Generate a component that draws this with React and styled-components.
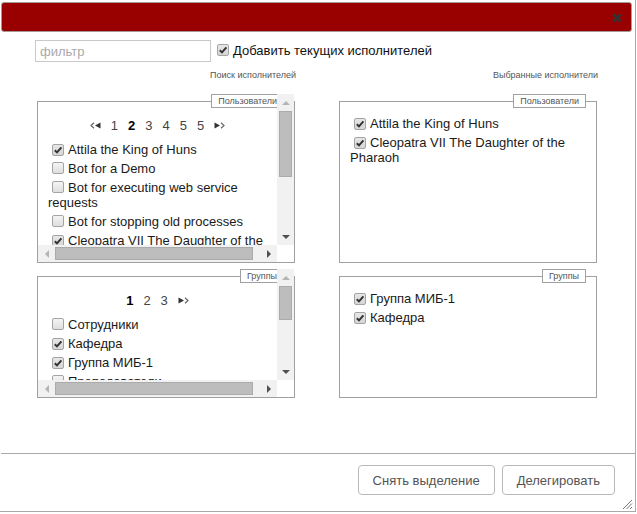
import React from "react";
import styled, { createGlobalStyle } from "styled-components";

const GlobalStyle = createGlobalStyle`
	html, body {
		margin: 0;
		padding: 0;
		background: #fff;
	}
	body {
		font-family: "Liberation Sans", Arial, sans-serif;
		font-size: 13px;
		color: #222;
	}
`;

const users = [
	{ name: "Attila the King of Huns", checked: true },
	{ name: "Bot for a Demo" },
	{ name: "Bot for executing web service requests" },
	{ name: "Bot for stopping old processes" },
	{ name: "Cleopatra VII The Daughter of the Pharaoh", checked: true },
	{ name: "Demo User" },
];

const groups = [
	{ name: "Сотрудники" },
	{ name: "Кафедра", checked: true },
	{ name: "Группа МИБ-1", checked: true },
	{ name: "Преподаватели" },
];

const pickedUsers = [
	{ name: "Attila the King of Huns", checked: true },
	{ name: "Cleopatra VII The Daughter of the Pharaoh", checked: true },
];

const pickedGroups = [
	{ name: "Группа МИБ-1", checked: true },
	{ name: "Кафедра", checked: true },
];

function Check({ checked }) {
	return (
		<CheckBox checked={checked}>
			{checked && (
				<svg width="10" height="10" viewBox="0 0 10 10">
					<path d="M1.8 5.2 L4 7.4 L8.4 2.4" fill="none" stroke="#333" strokeWidth="2" />
				</svg>
			)}
		</CheckBox>
	);
}

function PageArrow({ dir }) {
	return (
		<ArrowIcon width="11" height="7" viewBox="0 0 11 7">
			{dir === "prev" ? (
				<>
					<polyline points="4,0.8 1,3.5 4,6.2" fill="none" stroke="#666" strokeWidth="1.2" />
					<polygon points="10.5,0.5 5,3.5 10.5,6.5" fill="#333" />
				</>
			) : (
				<>
					<polygon points="0.5,0.5 6,3.5 0.5,6.5" fill="#333" />
					<polyline points="7,0.8 10,3.5 7,6.2" fill="none" stroke="#666" strokeWidth="1.2" />
				</>
			)}
		</ArrowIcon>
	);
}

function Pager({ pages, current, prev, next }) {
	return (
		<PagerRow>
			{prev && <PageArrow dir="prev" />}
			{pages.map((p, i) => (
				<PageLink key={i} active={p === current}>
					{p}
				</PageLink>
			))}
			{next && <PageArrow dir="next" />}
		</PagerRow>
	);
}

function ItemList({ items }) {
	return (
		<List>
			{items.map((it, i) => (
				<Item key={i}>
					<Check checked={it.checked} />
					{it.name}
				</Item>
			))}
		</List>
	);
}

function Panel({ legend, height, scroll, children }) {
	return (
		<Box height={height}>
			<Legend>{legend}</Legend>
			{scroll ? (
				<ScrollGrid>
					<Viewport>{children}</Viewport>
					<VTrack>
						<ScrollArrow dir="up" />
						<VThumb style={{ marginTop: scroll.top, height: scroll.size }} />
						<ScrollArrow dir="down" />
					</VTrack>
					<HTrack>
						<ScrollArrow dir="left" />
						<HThumb />
						<ScrollArrow dir="right" />
					</HTrack>
					<Corner />
				</ScrollGrid>
			) : (
				<Viewport top={14}>{children}</Viewport>
			)}
		</Box>
	);
}

export default function App() {
	return (
		<>
			<GlobalStyle />
			<Dialog>
				<TitleBar>
					<CloseBtn width="10" height="10" viewBox="0 0 10 10">
						<path d="M1.5 1.5 L8.5 8.5 M8.5 1.5 L1.5 8.5" stroke="#333" strokeWidth="3" />
					</CloseBtn>
				</TitleBar>
				<Main>
					<TopRow>
						<Filter placeholder="фильтр" />
						<AddLabel>
							<Check checked />
							Добавить текущих исполнителей
						</AddLabel>
					</TopRow>
					<Columns>
						<Column>
							<Heading>Поиск исполнителей</Heading>
							<Panel legend="Пользователи" height={162} scroll={{ top: 0, size: 66 }}>
								<Pager pages={[1, 2, 3, 4, 5, 5]} current={2} prev next />
								<ItemList items={users} />
							</Panel>
							<Gap />
							<Panel legend="Группы" height={122} scroll={{ top: 0, size: 34 }}>
								<Pager pages={[1, 2, 3]} current={1} next />
								<ItemList items={groups} />
							</Panel>
						</Column>
						<Column>
							<Heading>Выбранные исполнители</Heading>
							<Panel legend="Пользователи" height={162}>
								<ItemList items={pickedUsers} />
							</Panel>
							<Gap />
							<Panel legend="Группы" height={122}>
								<ItemList items={pickedGroups} />
							</Panel>
						</Column>
					</Columns>
				</Main>
				<Footer>
					<Button>Снять выделение</Button>
					<Button>Делегировать</Button>
					<Grip width="11" height="11" viewBox="0 0 11 11">
						<path d="M10 1 L1 10 M10 4.5 L4.5 10 M10 8 L8 10" stroke="#777" strokeWidth="1" />
					</Grip>
				</Footer>
			</Dialog>
		</>
	);
}

const Dialog = styled.div`
	box-sizing: border-box;
	width: 636px;
	height: 512px;
	display: flex;
	flex-direction: column;
	border-right: 1px solid #aaa;
	border-bottom: 1px solid #aaa;
`;

const TitleBar = styled.div`
	box-sizing: border-box;
	height: 30px;
	margin: 2px 3px 0 1px;
	background: #990000;
	border: 1px solid #a59b9b;
	border-radius: 3px;
	display: flex;
	align-items: center;
	justify-content: flex-end;
	padding: 2px 9px 0 0;
`;

const CloseBtn = styled.svg`
	display: block;
`;

const Main = styled.div`
	flex: 1;
	padding-top: 8px;
`;

const TopRow = styled.div`
	display: flex;
	align-items: center;
	padding-left: 35px;
	height: 22px;
`;

const Filter = styled.input`
	box-sizing: border-box;
	width: 176px;
	height: 22px;
	border: 1px solid #c9c9c9;
	padding: 0 4px;
	font-family: "Liberation Sans", Arial, sans-serif;
	font-size: 13px;
	outline: none;
	&::placeholder {
		color: #a9a9a9;
	}
`;

const AddLabel = styled.label`
	display: flex;
	align-items: center;
	margin-left: 2px;
	color: #111;
	font-size: 13px;
	margin-top: -2px;
`;

const Columns = styled.div`
	display: flex;
	gap: 44px;
	padding-left: 37px;
	margin-top: 8px;
`;

const Column = styled.div`
	width: 258px;
	display: flex;
	flex-direction: column;
`;

const Heading = styled.div`
	text-align: right;
	font-size: 9px;
	line-height: 11px;
	color: #555;
	margin-right: -1px;
	margin-bottom: 20px;
`;

const Gap = styled.div`
	height: 13px;
`;

const Box = styled.div`
	box-sizing: border-box;
	position: relative;
	height: ${(p) => p.height}px;
	border: 1px solid #a0a0a0;
	display: flex;
	flex-direction: column;
`;

const Legend = styled.div`
	position: absolute;
	top: -8px;
	right: 10px;
	height: 14px;
	box-sizing: border-box;
	line-height: 12px;
	padding: 0 6px;
	background: #fff;
	border: 1px solid #a0a0a0;
	font-size: 9px;
	color: #555;
`;

const ScrollGrid = styled.div`
	flex: 1;
	display: grid;
	grid-template-columns: 1fr 17px;
	grid-template-rows: 1fr 17px;
	min-height: 0;
`;

const Viewport = styled.div`
	overflow: hidden;
	padding: ${(p) => p.top ?? 16}px 0 0 10px;
	min-height: 0;
`;

const VTrack = styled.div`
	position: relative;
	z-index: 1;
	margin-top: -8px;
	background: #f1f1f1;
	display: flex;
	flex-direction: column;
	align-items: center;
`;

const VThumb = styled.div`
	box-sizing: border-box;
	width: 13px;
	background: #bdbdbd;
	border: 1px solid #ababab;
`;

const HTrack = styled.div`
	background: #f1f1f1;
	display: flex;
	align-items: center;
`;

const HThumb = styled.div`
	box-sizing: border-box;
	width: 198px;
	height: 13px;
	background: #bdbdbd;
	border: 1px solid #ababab;
`;

const Corner = styled.div`
	background: #fff;
`;

const arrowShape = {
	up: "border-left: 4px solid transparent; border-right: 4px solid transparent; border-bottom: 4px solid #b4b4b4;",
	down: "border-left: 4px solid transparent; border-right: 4px solid transparent; border-top: 4px solid #505050;",
	left: "border-top: 4px solid transparent; border-bottom: 4px solid transparent; border-right: 4px solid #b4b4b4;",
	right: "border-top: 4px solid transparent; border-bottom: 4px solid transparent; border-left: 4px solid #505050;",
};

const ScrollArrow = styled.div`
	width: 17px;
	height: 17px;
	flex-shrink: 0;
	display: flex;
	align-items: center;
	justify-content: center;
	&::after {
		content: "";
		width: 0;
		height: 0;
		${(p) => arrowShape[p.dir]}
	}
	${(p) => (p.dir === "down" ? "margin-top: auto;" : "")}
	${(p) => (p.dir === "right" ? "margin-left: auto;" : "")}
`;

const PagerRow = styled.div`
	display: flex;
	justify-content: center;
	align-items: center;
	gap: 10px;
	line-height: 15px;
	margin: 0 0 9px -10px;
	color: #444;
`;

const PageLink = styled.span`
	font-weight: ${(p) => (p.active ? 700 : 400)};
	color: ${(p) => (p.active ? "#000" : "#444")};
`;

const ArrowIcon = styled.svg`
	display: block;
`;

const List = styled.div`
	display: flex;
	flex-direction: column;
	gap: 4px;
`;

const Item = styled.div`
	line-height: 15px;
	color: #1a1a1a;
`;

const CheckBox = styled.span`
	box-sizing: border-box;
	display: inline-flex;
	align-items: center;
	justify-content: center;
	width: 12px;
	height: 12px;
	margin: 0 4px 0 4px;
	vertical-align: -1px;
	border: 1px solid #a4a4a4;
	border-radius: 2px;
	background: ${(p) =>
		p.checked
			? "linear-gradient(#e6e6e6, #d6d6d6)"
			: "linear-gradient(#f4f4f4, #dedede)"};
	svg {
		display: block;
	}
`;

const Footer = styled.div`
	position: relative;
	box-sizing: border-box;
	height: 58px;
	margin-left: 1px;
	border-top: 1px solid #aaa;
	display: flex;
	justify-content: flex-end;
	align-items: flex-start;
	gap: 7px;
	padding: 11px 20px 0 0;
`;

const Button = styled.button`
	box-sizing: border-box;
	height: 30px;
	padding: 0 14px;
	border: 1px solid #b9b9b9;
	border-radius: 4px;
	background: #fff;
	color: #555;
	font-family: "Liberation Sans", Arial, sans-serif;
	font-size: 13px;
`;

const Grip = styled.svg`
	position: absolute;
	right: 2px;
	bottom: 1px;
`;
